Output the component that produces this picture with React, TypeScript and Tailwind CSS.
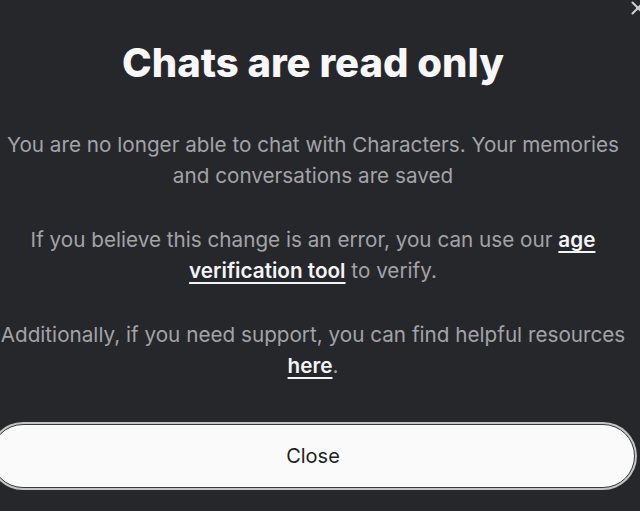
import { X } from 'lucide-react';

const BODY_FONT = "font-['Inter',_'Noto_Sans',_sans-serif]";

export default function App() {
  return (
    <div className={`relative h-[511px] w-full overflow-hidden bg-[#26272b] ${BODY_FONT}`}>
      {/* Dismiss icon, mostly off the top-right corner */}
      <button className="absolute -right-[9px] -top-[3px] text-[#cfcfd2]" aria-label="Dismiss">
        <X size={22} strokeWidth={2.2} />
      </button>

      <div className="flex justify-center">
        <div className="mr-[14px] flex w-[650px] shrink-0 flex-col items-center pt-[38px]">
          <h1 className="text-[40px] font-extrabold leading-[50px] tracking-[0px] text-[#f7f7f8]">
            Chats are read only
          </h1>

          <div className="mt-[41px] flex flex-col gap-[33px] text-center text-[20.7px] leading-[31px] text-[#a3a3a8]">
            <p className="px-[6px]">
              You are no longer able to chat with Characters. Your memories and conversations are saved
            </p>
            <p className="px-[24px]">
              If you believe this change is an error, you can use our{' '}
              <a
                href="#"
                className="font-semibold text-[#f4f4f5] underline decoration-[1.5px] underline-offset-[4px]"
              >
                age verification tool
              </a>{' '}
              to verify.
            </p>
            <p>
              Additionally, if you need support, you can find helpful resources{' '}
              <a
                href="#"
                className="font-semibold text-[#f4f4f5] underline decoration-[1.5px] underline-offset-[4px]"
              >
                here
              </a>
              .
            </p>
          </div>

          <button className="mt-[43px] h-[64px] w-[644px] rounded-full border border-[#3b3c40] bg-[#fafafa] text-[20px] text-[#1e1e22] ring-2 ring-[#c4c4c6]">
            Close
          </button>
        </div>
      </div>
    </div>
  );
}
